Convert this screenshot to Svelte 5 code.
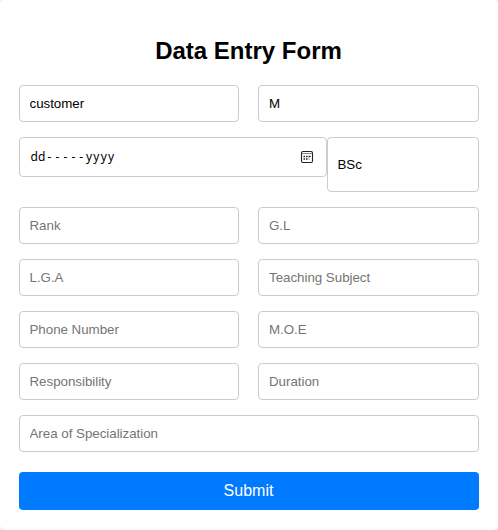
<script>
  const rows = [
    ['Rank', 'G.L'],
    ['L.G.A', 'Teaching Subject'],
    ['Phone Number', 'M.O.E'],
    ['Responsibility', 'Duration']
  ];
</script>

<form class="card" onsubmit={(e) => e.preventDefault()}>
  <h2>Data Entry Form</h2>
  <div class="row">
    <input class="field left" value="customer" aria-label="Name" />
    <input class="field right" value="M" aria-label="Gender" />
  </div>
  <div class="row">
    <div class="field date">
      <span class="value"><span class="day">dd</span><span class="dashes">-----</span><span class="year">yyyy</span></span>
      <svg width="14" height="14" viewBox="0 0 14 14" aria-hidden="true">
        <rect x="1.5" y="1.5" width="11" height="11" rx="1.5" fill="none" stroke="#222" stroke-width="1.1" />
        <path d="M2 3.5H12" stroke="#888" />
        <path d="M6 6.5H7.5M8.5 6.5H10M3.5 6.5H5M3.5 9H5M6 9H7.5" stroke="#222" stroke-width="1.4" />
        <path d="M10 6.5H11M8.5 9H9.5" stroke="#666" />
      </svg>
    </div>
    <input class="field degree" value="BSc" aria-label="Qualification" />
  </div>
  {#each rows as [a, b]}
    <div class="row">
      <input class="field left" placeholder={a} />
      <input class="field right" placeholder={b} />
    </div>
  {/each}
  <div class="row">
    <input class="field full" placeholder="Area of Specialization" />
  </div>
  <button>Submit</button>
</form>

<style>
  :global(body) {
    margin: 0;
    background: #f0f0f0;
    overflow: hidden;
  }
  .card {
    box-sizing: border-box;
    width: 500px;
    height: 531px;
    margin: -1px 0 0 -1px;
    padding: 38px 19px 20px 20px;
    border-radius: 8px;
    background: #fff;
    font-family: Arial, "Liberation Sans", sans-serif;
  }
  h2 {
    margin: 0 0 20px;
    padding-right: 2px;
    font-size: 24px;
    line-height: 28px;
    text-align: center;
    color: #000;
  }
  .row {
    display: flex;
    justify-content: space-between;
    align-items: flex-start;
    width: 460px;
    margin-bottom: 15px;
  }
  .field {
    box-sizing: border-box;
    height: 37px;
    margin: 0;
    padding: 0 10px 0 9.5px;
    border: 1px solid #ccc;
    border-radius: 4px;
    background: #fff;
    color: #000;
    font: 13.333px Arial, "Liberation Sans", sans-serif;
    letter-spacing: -0.02px;
    outline: none;
  }
  .field::placeholder {
    color: #757575;
    opacity: 1;
  }
  .left {
    width: 220px;
  }
  .right {
    width: 221px;
    padding-left: 10px;
  }
  .full {
    width: 460px;
  }
  .date {
    display: flex;
    align-items: center;
    justify-content: space-between;
    width: 308px;
    height: 40px;
    padding: 0 12px 0 10.5px;
  }
  .value {
    display: flex;
    white-space: nowrap;
    font: 12px/16px "Noto Sans", sans-serif;
  }
  .day {
    width: 17px;
    letter-spacing: 0;
  }
  .dashes {
    width: 38.5px;
    letter-spacing: 4.1px;
  }
  .year {
    letter-spacing: 1.2px;
  }
  .degree {
    width: 152px;
    height: 55px;
  }
  button {
    display: block;
    width: 460px;
    height: 38px;
    margin: 20px 0 0;
    padding: 0 1px 0 0;
    border: 0;
    border-radius: 4px;
    background: #007bff;
    color: #fff;
    font: 16px Arial, "Liberation Sans", sans-serif;
  }
</style>
